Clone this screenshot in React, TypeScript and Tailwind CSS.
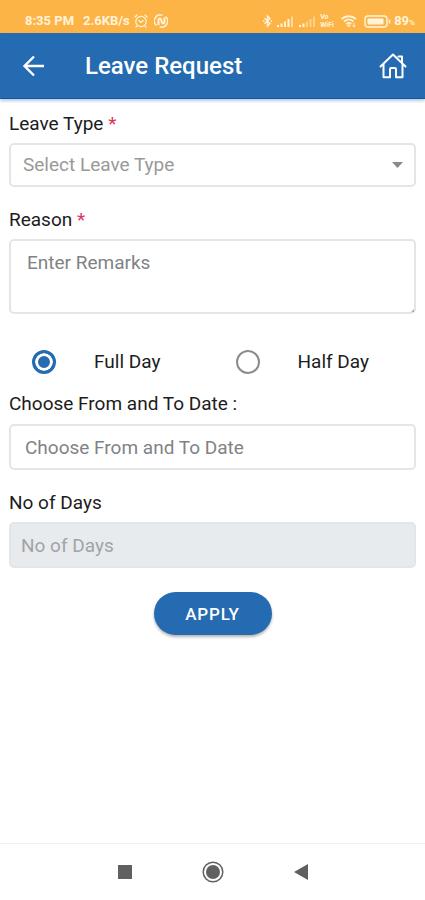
import React, { useState } from 'react';

const fieldClass = 'block w-full rounded-[5px] border-2 border-[#e4e5e7] text-[19px] leading-6 outline-none focus:border-[#246bb2]';

const StatusBar: React.FC = () => (
  <div className="flex h-[33px] items-end justify-between bg-[#fdb446] pr-[10px] pb-1 pl-[25px] text-[#fff3da]">
    <div className="flex items-center text-[13px] leading-4 font-bold">
      <span>8:35 PM</span>
      <span className="ml-[9px]">2.6KB/s</span>
      <svg className="ml-1 h-[14px] w-[14px]" viewBox="0 0 14 14" fill="none" stroke="currentColor" strokeWidth="1.2" strokeLinecap="round">
        <circle cx="7" cy="7.5" r="5.2" />
        <path d="M4.8 6.5 7 8.5l2.2-2M1 3l2-2M13 3l-2-2M3 12l-1 1.2M11 12l1 1.2" />
      </svg>
      <svg className="ml-[6px] h-[14px] w-[14px]" viewBox="0 0 14 14" fill="none" stroke="currentColor" strokeWidth="2">
        <path d="M2.500 11.500A6 6 0 0 1 8.500 1.300M11.500 2.500A6 6 0 0 1 5.500 12.700" strokeWidth="1.4" />
        <path d="M4.500 11V6c0-1.500 1.800-2 2.500-.5l1 3c.6 1.400 2.500 1 2.500-.5V3.500" />
      </svg>
    </div>
    <div className="flex items-center">
      <svg className="h-[14px] w-[9px]" viewBox="0 0 9 14" fill="none" stroke="currentColor" strokeWidth="1.4">
        <path d="m1.500 4.200 5.500 5.300L4.500 12V2L7 4.500 1.500 9.800" />
        <path d="M0 7h1.300M7.700 7H9" />
      </svg>
      <svg className="ml-[5px] h-[14px] w-[17px]" viewBox="0 0 17 14" fill="currentColor">
        <path d="M0 11h2v2H0zM3.500 9.500h2V13h-2zM7 7.500h2V13H7zM10.500 5h2v8h-2z" />
        <path d="M14 2.500h2V13h-2z" opacity=".6" />
      </svg>
      <svg className="ml-[5px] h-[14px] w-[17px]" viewBox="0 0 17 14" fill="currentColor">
        <path d="M0 11h2v2H0zM3.500 9.500h2V13h-2z" />
        <path d="M7 7.500h2V13H7zM10.500 5h2v8h-2zM14 2.500h2V13h-2z" opacity=".45" />
      </svg>
      <span className="ml-1 flex w-4 flex-col text-[7px] leading-[8px] font-bold">
        <span>Vo</span>
        <span>WiFi</span>
      </span>
      <svg className="ml-1 h-[14px] w-[18px]" viewBox="0 0 18 14" fill="none" stroke="currentColor" strokeWidth="1.800">
        <path d="M1.500 5C5.500 1.300 12 1.300 16 5M4 7.500c2.800-2.500 6.800-2.500 9.500 0M6.300 10c1.500-1.300 3.400-1.300 4.900 0" />
        <path d="m8.700 13 1.500-2H7.300zM14 9v4M12.500 11.500 14 13l1.500-1.500" strokeWidth="1" />
      </svg>
      <svg className="ml-[6px] h-[13px] w-[27px]" viewBox="0 0 27 13" fill="none" stroke="currentColor">
        <rect x="1" y="1" width="22" height="11" rx="3" strokeWidth="1.500" />
        <rect x="3.500" y="3.500" width="16" height="6" rx="1" fill="currentColor" stroke="none" />
        <path d="M25.500 4.500v4" strokeWidth="1.600" />
      </svg>
      <span className="ml-[3px] text-[13px] leading-4 font-bold">89</span>
      <span className="self-end text-[8px] leading-3 font-bold">%</span>
    </div>
  </div>
);

const Header: React.FC = () => (
  <header className="flex h-[66px] items-center border-b border-[#155696] bg-[#246bb2] pr-[17px] pl-[22px] text-white shadow-[0_2px_3px_rgba(36,107,178,0.35)]">
    <button type="button" aria-label="Back">
      <svg className="h-6 w-6" viewBox="0 0 24 24" fill="none" stroke="currentColor" strokeWidth="2.400">
        <path d="M22 12H3M12 2.500 2.500 12l9.500 9.500" />
      </svg>
    </button>
    <h1 className="ml-[39px] flex-1 text-2xl font-medium">Leave Request</h1>
    <button type="button" aria-label="Home">
      <svg className="h-[30px] w-[30px]" viewBox="0 0 30 30" fill="none" stroke="currentColor" strokeWidth="2" strokeLinejoin="round" strokeLinecap="round">
        <path d="M2.500 15.500 15 3.500l12.500 12" />
        <path d="M5.500 13.500v12.700h6.500v-8c0-.7.500-1.200 1.200-1.200h3.600c.7 0 1.200.5 1.200 1.200v8h6.500V13.500" />
        <path d="M20.500 5.500h3.500v6" />
      </svg>
    </button>
  </header>
);

const NavBar: React.FC = () => (
  <nav className="grid h-[57px] grid-cols-[1fr_88px_88px_88px_1fr] place-items-center border-t border-[#f1f1f1] bg-white text-[#606060]">
    <button type="button" aria-label="Recent apps" className="col-start-2">
      <svg className="h-[14px] w-[14px]" viewBox="0 0 14 14" fill="currentColor">
        <rect width="14" height="14" />
      </svg>
    </button>
    <button type="button" aria-label="Home screen">
      <svg className="h-[22px] w-[22px]" viewBox="0 0 22 22" fill="none">
        <circle cx="11" cy="11" r="9.800" stroke="currentColor" strokeWidth="1.500" />
        <circle cx="11" cy="11" r="7" fill="currentColor" />
      </svg>
    </button>
    <button type="button" aria-label="Go back">
      <svg className="h-4 w-[14px]" viewBox="0 0 14 16" fill="currentColor">
        <path d="M14 0v16L0 8z" />
      </svg>
    </button>
  </nav>
);

interface DayOptionProps {
  label: string;
  value: string;
  selected: string;
  onSelect: (value: string) => void;
}

const DayOption: React.FC<DayOptionProps> = ({ label, value, selected, onSelect }) => (
  <label className="flex items-center gap-[38px] pl-[23px]">
    <input
      type="radio"
      name="dayType"
      value={value}
      checked={selected === value}
      onChange={() => onSelect(value)}
      className="h-6 w-6 appearance-none rounded-full border-2 border-[#8c8c8c] bg-white checked:border-[3px] checked:border-[#246bb2] checked:bg-[#246bb2] checked:shadow-[inset_0_0_0_3px_white]"
    />
    <span>{label}</span>
  </label>
);

const App: React.FC = () => {
  const [leaveType, setLeaveType] = useState('');
  const [dayType, setDayType] = useState('full');

  return (
    <div className="flex min-h-screen flex-col bg-white font-[Roboto,sans-serif]">
      <StatusBar />
      <Header />

      <main className="flex-1">
        <form className="px-[9px] pt-[13px] text-[19px] leading-6 text-[#1c1c1c]" onSubmit={(e) => e.preventDefault()}>
          <label htmlFor="leaveType" className="mb-[7px] block">
            Leave Type <span className="text-[#dc3558]">*</span>
          </label>
          <div className="relative">
            <select
              id="leaveType"
              value={leaveType}
              onChange={(e) => setLeaveType(e.target.value)}
              className={`${fieldClass} h-11 appearance-none bg-white px-3 ${leaveType ? 'text-[#212529]' : 'text-[#999999]'}`}
            >
              <option value="">Select Leave Type</option>
              <option value="casual">Casual Leave</option>
              <option value="sick">Sick Leave</option>
            </select>
            <svg className="pointer-events-none absolute top-[19px] right-[13px] h-[6px] w-[11px]" viewBox="0 0 11 6" fill="#8a8a8a">
              <path d="M0 0h11L5.500 6z" />
            </svg>
          </div>

          <label htmlFor="reason" className="mt-[21px] mb-[7px] block">
            Reason <span className="text-[#dc3558]">*</span>
          </label>
          <div className="relative">
            <textarea id="reason" placeholder="Enter Remarks" className={`${fieldClass} h-[75px] resize-none px-4 py-[10px] text-[#212529] placeholder:text-[#808386]`} />
            <svg className="pointer-events-none absolute right-[2px] bottom-[2px] h-[3px] w-[3px]" viewBox="0 0 3 3" fill="#b0b0b0">
              <path d="M3 0v3H0z" />
            </svg>
          </div>

          <div className="mt-9 grid grid-cols-2">
            <DayOption label="Full Day" value="full" selected={dayType} onSelect={setDayType} />
            <DayOption label="Half Day" value="half" selected={dayType} onSelect={setDayType} />
          </div>

          <label htmlFor="dates" className="mt-[18px] mb-2 block">Choose From and To Date :</label>
          <input id="dates" type="text" placeholder="Choose From and To Date" className={`${fieldClass} h-[46px] px-[14px] text-[#212529] placeholder:text-[#808386]`} />

          <label htmlFor="days" className="mt-[21px] mb-[7px] block">No of Days</label>
          <input id="days" type="text" disabled placeholder="No of Days" className={`${fieldClass} h-[46px] bg-[#e7ebee] px-[10px] text-[#212529] placeholder:text-[#a0a4a8]`} />

          <div className="mt-6 flex justify-center">
            <button type="submit" className="h-[43px] w-[118px] rounded-full bg-[#246bb2] text-[17px] font-medium tracking-wider text-white shadow-[0_2px_3px_rgba(0,0,0,0.3)]">
              APPLY
            </button>
          </div>
        </form>
      </main>

      <NavBar />
    </div>
  );
};

export default App;
